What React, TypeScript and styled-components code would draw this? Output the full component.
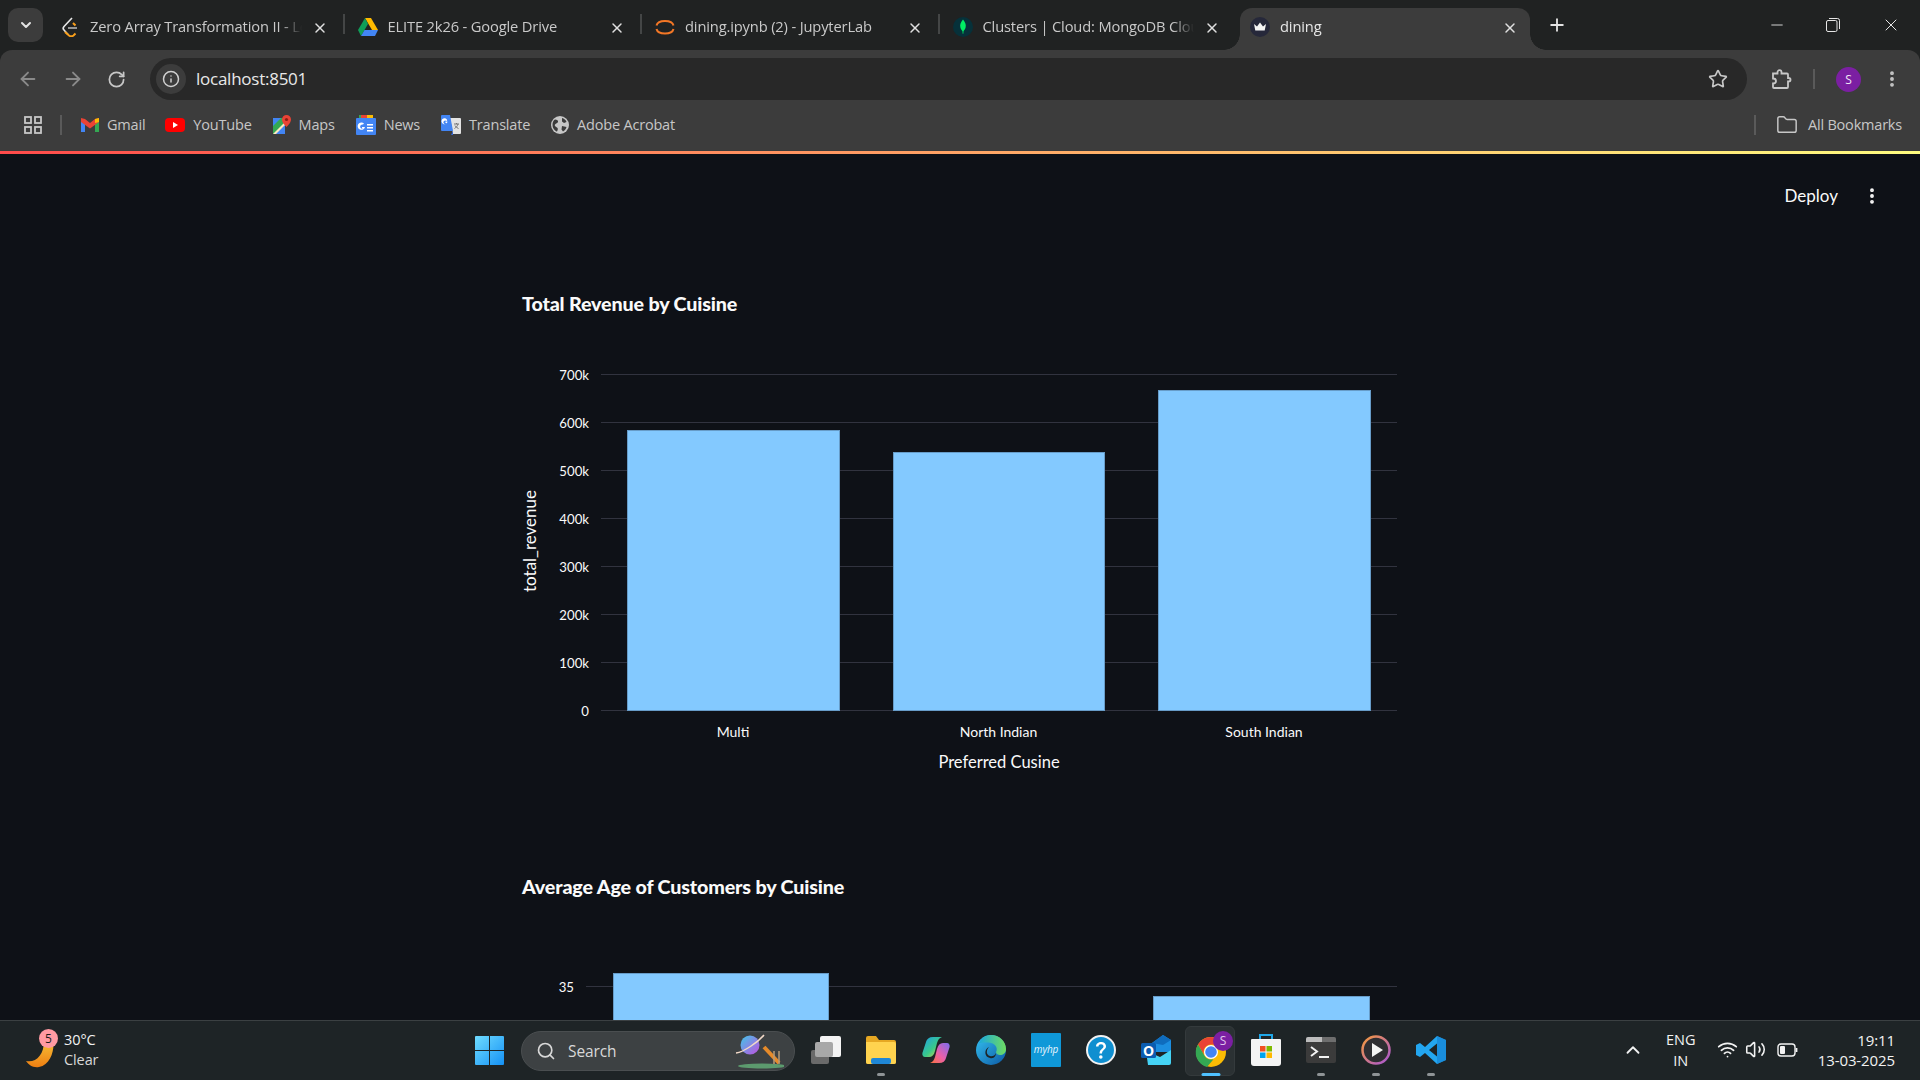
import React from "react";
import styled, { createGlobalStyle } from "styled-components";
import {
  ArrowLeft,
  ArrowRight,
  ChevronDown,
  ChevronUp,
  EllipsisVertical,
  Folder,
  Info,
  Minus,
  Plus,
  RotateCw,
  Search,
  Star,
  Volume2,
  Wifi,
  X,
} from "lucide-react";

const uiFont = `"Open Sans", "Noto Sans", sans-serif`;
const appFont = `"Lato", "Noto Sans", sans-serif`;

const GlobalStyle = createGlobalStyle`
  html, body, #root { margin: 0; padding: 0; height: 100%; }
  body { background: #0e1117; overflow: hidden; font-family: ${uiFont}; }
`;

const Shell = styled.div`
  width: 1920px;
  height: 1080px;
  display: flex;
  flex-direction: column;
  overflow: hidden;
  background: #202222;
`;

/* ---------- tab strip ---------- */

const TabStrip = styled.div`
  height: 50px;
  flex: none;
  display: flex;
  align-items: flex-end;
  padding-left: 8px;
  background: #202222;
`;

const TabSearch = styled.div`
  width: 35px;
  height: 34px;
  margin: 0 5px 8px 0;
  flex: none;
  display: flex;
  align-items: center;
  justify-content: center;
  border-radius: 10px;
  background: #3c3c3c;
  color: #e3e3e3;
`;

const TabCell = styled.div<{ $active?: boolean; $last?: boolean }>`
  position: relative;
  width: ${({ $active }) => ($active ? "290px" : "297.5px")};
  height: 42px;
  flex: none;
  margin-left: ${({ $active }) => ($active ? "2px" : "0")};
  padding: ${({ $active }) => ($active ? "0 12px 0 10px" : "0 18px 0 12px")};
  box-sizing: border-box;
  display: flex;
  align-items: center;
  gap: 10px;
  color: ${({ $active }) => ($active ? "#e6e6e6" : "#c9c9c9")};
  background: ${({ $active }) => ($active ? "#3c3c3c" : "transparent")};
  border-radius: 12px 12px 0 0;

  &::after {
    content: "";
    position: absolute;
    display: ${({ $active, $last }) => ($active || $last ? "none" : "block")};
    right: 1px;
    top: 6px;
    width: 2px;
    height: 20px;
    background: #444646;
  }

  &::before {
    content: "";
    position: absolute;
    display: ${({ $active }) => ($active ? "block" : "none")};
    left: -16px;
    right: -16px;
    bottom: 0;
    height: 16px;
    z-index: 0;
    background:
      radial-gradient(circle at 0 0, transparent 15.5px, #3c3c3c 16px) left bottom / 16px 16px no-repeat,
      radial-gradient(circle at 100% 0, transparent 15.5px, #3c3c3c 16px) right bottom / 16px 16px no-repeat;
  }
`;

const Favicon = styled.span`
  width: 20px;
  height: 20px;
  flex: none;
  position: relative;
  z-index: 1;
  margin-top: -4px;
  display: flex;
  align-items: center;
  justify-content: center;
`;

const TabTitle = styled.span`
  flex: 1;
  min-width: 0;
  position: relative;
  z-index: 1;
  overflow: hidden;
  white-space: nowrap;
  font-size: 14.700px;
  letter-spacing: -0.150px;
  line-height: 20px;
  margin-top: -7px;
  mask-image: linear-gradient(90deg, #000 90%, transparent 100%);
`;

const TabClose = styled.span`
  flex: none;
  position: relative;
  z-index: 1;
  display: flex;
  color: #e0e0e0;
  margin-top: -2px;
`;

const NewTab = styled.div`
  margin: 0 0 8px 17px;
  height: 34px;
  display: flex;
  align-items: center;
  color: #e3e3e3;
`;

const WindowControls = styled.div`
  margin-left: auto;
  height: 50px;
  display: flex;
  align-items: flex-start;
  color: #e6e6e6;
`;

const WindowButton = styled.div<{ $wide?: boolean }>`
  width: ${({ $wide }) => ($wide ? "59px" : "56px")};
  height: 50px;
  display: flex;
  align-items: center;
  justify-content: center;
`;

/* ---------- toolbar ---------- */

const Toolbar = styled.div`
  height: 50px;
  flex: none;
  display: flex;
  align-items: flex-start;
  padding-top: 8px;
  box-sizing: border-box;
  background: #3c3c3c;
  border-radius: 12px 12px 0 0;
`;

const NavButtons = styled.div`
  width: 150px;
  height: 42px;
  flex: none;
  display: flex;
  align-items: center;
  padding-left: 17px;
  box-sizing: border-box;
  gap: 23px;
`;

const NavIcon = styled.span<{ $dim?: boolean }>`
  display: flex;
  color: ${({ $dim }) => ($dim ? "#8a8a8a" : "#c7c7c7")};
`;

const Omnibox = styled.div`
  width: 1597px;
  height: 42px;
  flex: none;
  display: flex;
  align-items: center;
  padding: 0 19px 0 6px;
  box-sizing: border-box;
  border-radius: 21px;
  background: #282828;
  color: #e8e8e8;
  font-size: 17px;
  letter-spacing: -0.250px;
`;

const SiteInfo = styled.span`
  width: 30px;
  height: 30px;
  margin-right: 10px;
  border-radius: 50%;
  background: #3c3c3c;
  display: flex;
  align-items: center;
  justify-content: center;
  color: #d0d0d0;
`;

const Url = styled.span`
  flex: 1;
  margin-top: -2px;
`;

const ToolbarEnd = styled.div`
  flex: 1;
  height: 42px;
  display: flex;
  align-items: center;
  color: #c7c7c7;
  padding-left: 24px;
`;

const VerticalRule = styled.span<{ $ml?: number; $mr?: number }>`
  width: 2px;
  height: 20px;
  flex: none;
  margin-left: ${({ $ml }) => $ml ?? 0}px;
  margin-right: ${({ $mr }) => $mr ?? 0}px;
  background: #5a5a5a;
`;

const Avatar = styled.span`
  width: 25px;
  height: 25px;
  margin: 0 21px 0 21px;
  border-radius: 50%;
  flex: none;
  background: #7b1fa2;
  color: #f0e6f5;
  font-size: 12px;
  display: flex;
  align-items: center;
  justify-content: center;
`;

/* ---------- bookmarks ---------- */

const BookmarkBar = styled.div`
  height: 51px;
  flex: none;
  display: flex;
  align-items: center;
  padding: 0 18px 2px 24px;
  box-sizing: border-box;
  background: #3c3c3c;
  color: #c7c7c7;
  font-size: 14.500px;
  letter-spacing: -0.200px;
`;

const Bookmark = styled.span<{ $gap: number }>`
  display: flex;
  align-items: center;
  gap: 8px;
  margin-left: ${({ $gap }) => $gap}px;
  white-space: nowrap;
`;

const AllBookmarks = styled.span`
  margin-left: auto;
  display: flex;
  align-items: center;
  white-space: nowrap;
`;

const FolderSlot = styled.span`
  display: flex;
  margin: 0 10px 0 20px;
`;

const Decoration = styled.div`
  height: 3px;
  flex: none;
  background: linear-gradient(90deg, #ff4b4b, #fffd80);
`;

/* ---------- streamlit page ---------- */

const Page = styled.main`
  flex: 1;
  min-height: 0;
  overflow: hidden;
  background: #0e1117;
  color: #fafafa;
  font-family: ${appFont};
`;

const AppHeader = styled.div`
  height: 83px;
  display: flex;
  align-items: center;
  justify-content: flex-end;
  gap: 24px;
  padding-right: 38px;
  font-size: 17px;
`;

const Column = styled.div`
  width: 876px;
  margin: 0 auto;
`;

const SectionTitle = styled.h3<{ $top: number }>`
  margin: ${({ $top }) => $top}px 0 16px;
  height: 40px;
  line-height: 40px;
  font-size: 19.700px;
  font-weight: 900;
  letter-spacing: -0.150px;
  white-space: nowrap;
`;

const ChartSvg = styled.svg`
  display: block;
  overflow: visible;

  text {
    fill: #fafafa;
    font-family: ${appFont};
  }
`;

type BarDatum = { label: string; value: number; x: number; width: number };

type ChartProps = {
  height: number;
  zeroY: number;
  tickStep: number;
  tickPx: number;
  ticks: number[];
  gridStart: number;
  tickEnd: number;
  bars: BarDatum[];
  xTitle?: string;
  yTitle?: string;
};

const formatTick = (v: number) => (v >= 1000 ? `${v / 1000}k` : `${v}`);

const BarChart: React.FC<ChartProps> = ({
  height,
  zeroY,
  tickStep,
  tickPx,
  ticks,
  gridStart,
  tickEnd,
  bars,
  xTitle,
  yTitle,
}) => {
  const toY = (v: number) => zeroY - (v / tickStep) * tickPx;
  return (
    <ChartSvg width={876} height={height} viewBox={`0 0 876 ${height}`}>
      {ticks.map((t) => (
        <g key={t}>
          <line x1={gridStart} x2={875} y1={toY(t) + 0.5} y2={toY(t) + 0.5} stroke="#31333f" />
          <text x={tickEnd} y={toY(t) + 6} textAnchor="end" fontSize={13.2}>
            {formatTick(t)}
          </text>
        </g>
      ))}
      {bars.map((b) => (
        <g key={b.label}>
          <rect
            x={b.x + 0.5}
            y={Math.round(toY(b.value)) + 0.5}
            width={b.width}
            height={zeroY - Math.round(toY(b.value))}
            fill="#83c9ff"
            stroke="#679cc8"
          />
          {xTitle && (
            <text x={b.x + b.width / 2} y={zeroY + 27} textAnchor="middle" fontSize={14}>
              {b.label}
            </text>
          )}
        </g>
      ))}
      {xTitle && (
        <text x={477} y={zeroY + 58} textAnchor="middle" fontSize={16.5}>
          {xTitle}
        </text>
      )}
      {yTitle && (
        <text x={0} y={0} textAnchor="middle" fontSize={17} transform="translate(14 201) rotate(-90)">
          {yTitle}
        </text>
      )}
    </ChartSvg>
  );
};

/* ---------- taskbar ---------- */

const Taskbar = styled.footer`
  position: relative;
  height: 60px;
  flex: none;
  box-sizing: border-box;
  display: flex;
  align-items: center;
  background: #1e2426;
  border-top: 1px solid #3b4042;
  color: #f2f2f2;
  font-size: 14.500px;
  letter-spacing: -0.100px;
`;

const Weather = styled.div`
  width: 475px;
  height: 100%;
  flex: none;
  display: flex;
  align-items: center;
  gap: 3px;
  padding: 0 0 2px 26px;
  box-sizing: border-box;
`;

const WeatherArt = styled.span`
  position: relative;
  width: 35px;
  height: 38px;
  flex: none;
`;

const MoonSvg = styled.svg`
  position: absolute;
  left: 0;
  top: 8px;
`;

const Badge = styled.span`
  position: absolute;
  left: 13px;
  top: -2px;
  width: 19px;
  height: 19px;
  border-radius: 50%;
  background: #ff9aa2;
  color: #1b1b1b;
  font-size: 12px;
  line-height: 19px;
  text-align: center;
`;

const WeatherText = styled.span`
  display: flex;
  flex-direction: column;
  line-height: 20px;
`;

const MutedLine = styled.span`
  color: #d8d8d8;
`;

const StartButton = styled.span`
  width: 46px;
  flex: none;
  display: flex;
`;

const SearchPill = styled.div`
  width: 274px;
  height: 40px;
  flex: none;
  box-sizing: border-box;
  display: flex;
  align-items: center;
  padding: 0 10px 0 14px;
  gap: 12px;
  border-radius: 20px;
  border: 1px solid #4a4e50;
  background: #3d4143;
  color: #d8d8d8;
  font-size: 15.500px;
`;

const SearchLabel = styled.span`
  flex: 1;
`;

const AppRow = styled.div`
  margin-left: 3px;
  display: flex;
  align-items: center;
`;

const AppSlot = styled.span<{ $active?: boolean }>`
  position: relative;
  width: 55px;
  height: 50px;
  display: flex;
  align-items: center;
  justify-content: center;

  &::before {
    content: "";
    display: ${({ $active }) => ($active ? "block" : "none")};
    position: absolute;
    left: 2px;
    width: 50px;
    height: 50px;
    top: 0;
    border-radius: 6px;
    background: #2b3133;
    border: 1px solid #343a3c;
    box-sizing: border-box;
  }
`;

const SlotIcon = styled.span`
  position: relative;
  display: flex;
  margin-top: -2px;
`;

const RunDot = styled.span<{ $active?: boolean }>`
  position: absolute;
  bottom: 0;
  left: 50%;
  transform: translateX(-50%);
  height: 3px;
  width: ${({ $active }) => ($active ? "19px" : "8px")};
  border-radius: 2px;
  background: ${({ $active }) => ($active ? "#4fc1ff" : "#8f9496")};
`;

const Tray = styled.div`
  margin-left: auto;
  height: 100%;
  display: flex;
  align-items: center;
  padding: 0 25px 2px 0;
`;

const TrayChevron = styled.span`
  display: flex;
  margin-right: 15px;
`;

const Lang = styled.span`
  width: 44px;
  text-align: center;
  line-height: 21px;
  margin-right: 14px;
`;

const TrayIcons = styled.span`
  display: flex;
  align-items: center;
  gap: 7px;
  margin-right: 20px;
`;

const BatterySlot = styled.span`
  display: flex;
  margin-left: 4px;
`;

const Clock = styled.span`
  text-align: right;
  line-height: 20px;
  font-size: 15px;
`;

/* ---------- drawn logos ---------- */

const LeetCodeIcon = () => (
  <svg width="18" height="20" viewBox="0 0 18 20" fill="none">
    <path d="M11 1 3 9.500a2.500 2.500 0 0 0 0 3.500l4 4.500" stroke="#e8e8e8" strokeWidth="1.600" />
    <path d="M4 15l4 3.500c1.500 1 3 1 4.500 0l2-2M12 6l2.500 2.500" stroke="#f89f1b" strokeWidth="2" />
    <path d="M7 11h9" stroke="#b3b3b3" strokeWidth="1.600" />
  </svg>
);

const DriveIcon = () => (
  <svg width="20" height="18" viewBox="0 0 20 18">
    <path d="M7 0h6l7 12h-6z" fill="#ffba00" />
    <path d="M7 0 0 12l3 6 7-12z" fill="#0f9d58" />
    <path d="M6.500 12H20l-3 6H3z" fill="#4285f4" />
  </svg>
);

const JupyterIcon = () => (
  <svg width="20" height="20" viewBox="0 0 20 20" fill="none" stroke="#f37726" strokeWidth="2">
    <path d="M1.500 8.500C3 2.500 17 2.500 18.500 8.500" />
    <path d="M1.500 12C3 18 17 18 18.500 12" />
  </svg>
);

const MongoIcon = () => (
  <svg width="20" height="20" viewBox="0 0 20 20">
    <circle cx="10" cy="10" r="10" fill="#06313a" />
    <path d="M10 2.500c2.600 3 3.200 5.500 2.600 8-.4 1.700-1.600 3-2.100 3.800l-.2 2.400h-.6l-.2-2.400c-.5-.8-1.700-2.100-2.100-3.800-.6-2.500 0-5 2.600-8z" fill="#00ed64" />
  </svg>
);

const CrownIcon = () => (
  <svg width="20" height="20" viewBox="0 0 20 20">
    <circle cx="10" cy="10" r="10" fill="#26283a" />
    <path d="M4 7l3 2.500L10 5.500l3 4L16 7l-1.300 6.500H5.300z" fill="#f5f5f5" />
  </svg>
);

const AppsGrid = () => (
  <svg width="18" height="18" viewBox="0 0 18 18" fill="none" stroke="#c7c7c7" strokeWidth="1.800">
    <rect x="1" y="1" width="6" height="6" />
    <rect x="11" y="1" width="6" height="6" />
    <rect x="1" y="11" width="6" height="6" />
    <rect x="11" y="11" width="6" height="6" />
  </svg>
);

const GmailIcon = () => (
  <svg width="18" height="14" viewBox="0 0 18 14">
    <path d="M0 2v12h4V5z" fill="#4285f4" />
    <path d="M14 5v9h4V2z" fill="#34a853" />
    <path d="M14 1 9 5 4 1 0 0v4l9 6.500L18 4V0z" fill="#ea4335" />
    <path d="M14 1v4l4-1V0z" fill="#fbbc04" />
  </svg>
);

const YouTubeIcon = () => (
  <svg width="20" height="14" viewBox="0 0 20 14">
    <rect width="20" height="14" rx="4" fill="#ff0000" />
    <path d="M8 4l5 3-5 3z" fill="#fff" />
  </svg>
);

const MapsIcon = () => (
  <svg width="18" height="20" viewBox="0 0 18 20">
    <path d="M0 3h12v16H0z" fill="#34a853" />
    <path d="M0 3h8L0 11z" fill="#4285f4" />
    <path d="M0 19 12 7v12z" fill="#fbe9c0" />
    <path d="M3 19 12 10v9z" fill="#4285f4" />
    <path d="M13.500 0A4.500 4.500 0 0 0 9 4.500C9 8 13.500 12 13.500 12S18 8 18 4.500A4.500 4.500 0 0 0 13.500 0z" fill="#ea4335" />
    <circle cx="13.500" cy="4.500" r="1.600" fill="#8e1d14" />
  </svg>
);

const NewsIcon = () => (
  <svg width="20" height="20" viewBox="0 0 20 20">
    <path d="M3 0h14v5H3z" fill="#34a853" />
    <path d="M5 0h6v3H5z" fill="#ea4335" />
    <path d="M11 0h6v3h-6z" fill="#fbbc04" />
    <rect y="3" width="20" height="17" rx="1" fill="#4285f4" />
    <path d="M11 9h6v1.500h-6zM11 12h6v1.500h-6zM11 15h6v1.500h-6z" fill="#fff" />
    <path d="M9 12H6v1.500h1.500A2.200 2.200 0 1 1 7 9.500l1-1A3.700 3.700 0 1 0 9 12z" fill="#fff" />
  </svg>
);

const TranslateIcon = () => (
  <svg width="20" height="20" viewBox="0 0 20 20">
    <path d="M9 3h10a1 1 0 0 1 1 1v14a1 1 0 0 1-1 1H12z" fill="#e3e3e3" />
    <path d="M1 0h8l3 16H1a1 1 0 0 1-1-1V1a1 1 0 0 1 1-1z" fill="#4285f4" />
    <path d="M12 16l-2 4 2 0z" fill="#3367d6" />
    <path d="M6.500 6.500H4.500V8H6a1.800 1.800 0 1 1-.500-2l.8-.8A3 3 0 1 0 6.500 6.500z" fill="#fff" />
    <path d="M13 9h5M15.500 8v1M17 9c-.5 2-2 3.500-3.500 4.500M14 10.500c.7 1.300 2 2.500 3.500 3" stroke="#757575" strokeWidth="1" fill="none" />
  </svg>
);

const GlobeIcon = () => (
  <svg width="18" height="18" viewBox="0 0 18 18">
    <circle cx="9" cy="9" r="9" fill="#c7c7c7" />
    <path d="M4 3.500c2 0 3.500 1 3 2.500S5 7 4 8.500 5.500 11 6.500 12 6 16 5.500 15.500C3 14 1.500 12 1.500 9S2.500 4.500 4 3.500zM11 2c2 .5 4 2 4.500 4l-2.500 1-2-1.500zM11 10l4.500 1c-.5 2-2 3.500-3.500 4.500l-1.500-2z" fill="#3c3c3c" />
  </svg>
);

const RestoreIcon = () => (
  <svg width="14" height="14" viewBox="0 0 14 14" fill="none" stroke="#e6e6e6" strokeWidth="1">
    <rect x="0.500" y="2.500" width="10.500" height="11" rx="1.500" />
    <path d="M3 .5h8.500a2 2 0 0 1 2 2V11" />
  </svg>
);

const PuzzleIcon = () => (
  <svg width="21" height="21" viewBox="0 0 21 21" fill="none" stroke="#c7c7c7" strokeWidth="1.800">
    <path d="M2 4.500h4.500V3.200a2 2 0 0 1 4 0v1.300H16a1 1 0 0 1 1 1V9h.8a1.700 1.700 0 0 1 0 3.400H17V18a1 1 0 0 1-1 1H3a1 1 0 0 1-1-1v-3.500c2 0 3-1 3-2.500s-1-2.500-3-2.500z" />
  </svg>
);

const MoonIcon = () => (
  <MoonSvg width="28" height="30" viewBox="0 0 28 30">
    <defs>
      <linearGradient id="moon" x1="0" x2="0" y1="0" y2="1">
        <stop offset="0" stopColor="#f7c53a" />
        <stop offset="1" stopColor="#ee7f12" />
      </linearGradient>
    </defs>
    <path d="M27 0c2 10-2 26-14 28C7 29 3 26 0 22c10 2 18-6 18-20z" fill="url(#moon)" />
  </MoonSvg>
);

const WindowsLogo = () => (
  <svg width="29" height="29" viewBox="0 0 29 29">
    <defs>
      <linearGradient id="win" x1="0" x2="1" y1="0" y2="1">
        <stop offset="0" stopColor="#6fdcff" />
        <stop offset="1" stopColor="#1591f5" />
      </linearGradient>
    </defs>
    <path d="M0 1a1 1 0 0 1 1-1h13v14H0zM15 0h13a1 1 0 0 1 1 1v13H15zM0 15h14v14H1a1 1 0 0 1-1-1zM15 15h14v13a1 1 0 0 1-1 1H15z" fill="url(#win)" />
  </svg>
);

const SearchArt = () => (
  <svg width="54" height="36" viewBox="0 0 50 36">
    <defs>
      <linearGradient id="planet" x1="0" x2="1" y1="0" y2="1">
        <stop offset="0" stopColor="#3fc7e8" />
        <stop offset="1" stopColor="#c34fe0" />
      </linearGradient>
    </defs>
    <ellipse cx="30" cy="33" rx="24" ry="2.500" fill="#5c9a6e" />
    <circle cx="18" cy="12" r="9.500" fill="url(#planet)" />
    <path d="M4 20C12 19 26 9 32 2" stroke="#f2d9c8" strokeWidth="1.500" fill="none" />
    <path d="M32 14 47 30" stroke="#e58a2a" strokeWidth="4" />
    <path d="M42 18v13M47 18v13" stroke="#b79a78" strokeWidth="1.500" />
  </svg>
);

const TaskViewIcon = () => (
  <svg width="30" height="28" viewBox="0 0 30 28">
    <rect x="0" y="14" width="18" height="14" rx="2" fill="#6a6a6a" />
    <rect x="9" y="0" width="21" height="21" rx="2" fill="#f4f4f4" />
    <rect x="4" y="6" width="18" height="15" rx="2" fill="#a8a8a8" />
  </svg>
);

const ExplorerIcon = () => (
  <svg width="30" height="28" viewBox="0 0 30 28">
    <path d="M0 2a2 2 0 0 1 2-2h8l3 4h15a2 2 0 0 1 2 2v20a2 2 0 0 1-2 2H2a2 2 0 0 1-2-2z" fill="#e6a823" />
    <path d="M0 6h28a2 2 0 0 1 2 2v18a2 2 0 0 1-2 2H2a2 2 0 0 1-2-2z" fill="#ffd34f" />
    <rect x="5" y="22" width="20" height="6" rx="2" fill="#1f87d6" />
  </svg>
);

const CopilotIcon = () => (
  <svg width="30" height="28" viewBox="0 0 28 28">
    <defs>
      <linearGradient id="cpA" x1="0" x2="1" y1="0" y2="1">
        <stop offset="0" stopColor="#1f9fe8" />
        <stop offset="0.550" stopColor="#39c98a" />
        <stop offset="1" stopColor="#f7d73a" />
      </linearGradient>
      <linearGradient id="cpB" x1="1" x2="0" y1="0" y2="1">
        <stop offset="0" stopColor="#7a6cf0" />
        <stop offset="0.550" stopColor="#ec5fa8" />
        <stop offset="1" stopColor="#f9733d" />
      </linearGradient>
    </defs>
    <path d="M11 1h9c-3 1-4 3-5 6l-2 8c-1 4-3 6-6 6H3c-2 0-3-2-2.600-4L4 6c.7-3 3-5 7-5z" fill="url(#cpA)" />
    <path d="M17 27H8c3-1 4-3 5-6l2-8c1-4 3-6 6-6h4c2 0 3 2 2.600 4L24 22c-.7 3-3 5-7 5z" fill="url(#cpB)" />
  </svg>
);

const EdgeIcon = () => (
  <svg width="30" height="30" viewBox="0 0 30 30">
    <defs>
      <linearGradient id="edgeA" x1="0" x2="1" y1="0" y2="1">
        <stop offset="0" stopColor="#35c1f1" />
        <stop offset="1" stopColor="#0c59a4" />
      </linearGradient>
      <linearGradient id="edgeB" x1="0" x2="1" y1="0" y2="0">
        <stop offset="0" stopColor="#1ba8dc" />
        <stop offset="1" stopColor="#6fdc5f" />
      </linearGradient>
    </defs>
    <circle cx="15" cy="15" r="15" fill="url(#edgeA)" />
    <path d="M3 8C6 2 11 0 15 0c8 0 15 6 15 14 0 4-3 6-6 6-2 0-4-1-4-3 2-3 0-8-5-9C10 7 6 8 3 8z" fill="url(#edgeB)" />
    <path d="M13 12c-3 3-3 8 1 9 2 .6 5 0 6-3 0 3-2 6-6 5-6-1-6-9-1-11z" fill="#1e2426" />
  </svg>
);

const HpText = styled.text`
  fill: #eaf6fc;
  font-size: 10px;
  font-style: italic;
`;

const MyHpIcon = () => (
  <svg width="30" height="34" viewBox="0 0 30 34">
    <rect width="30" height="34" rx="1" fill="#0f98d8" />
    <HpText x="15" y="20" textAnchor="middle">myhp</HpText>
  </svg>
);

const HelpIcon = () => (
  <svg width="30" height="30" viewBox="0 0 30 30">
    <circle cx="15" cy="15" r="14" fill="#0f8fd0" stroke="#f2f2f2" strokeWidth="2" />
    <path d="M10 11.500C10 8.500 12.500 7 15 7s5 1.500 5 4.300c0 3.500-4 3.500-4 7.200h-2.500c0-4.500 4-4.500 4-7.200 0-1.300-1-2-2.500-2s-2.500.8-2.500 2.200z" fill="#fff" />
    <circle cx="14.800" cy="22" r="1.800" fill="#fff" />
  </svg>
);

const OutlookText = styled.text`
  fill: #fff;
  font-size: 14px;
  font-weight: 700;
`;

const OutlookIcon = () => (
  <svg width="30" height="30" viewBox="0 0 30 30">
    <path d="M11 8 22 0l8 5v12H11z" fill="#1c8ee0" />
    <path d="M22 0l8 5-8 5-11-2z" fill="#0f6cbd" />
    <path d="M5 16l14 6 11-7v13a2 2 0 0 1-2 2H7z" fill="#45d3f5" />
    <rect x="0" y="8" width="15" height="15" rx="1.500" fill="#0a5cb0" />
    <OutlookText x="7.500" y="20.500" textAnchor="middle">O</OutlookText>
  </svg>
);

const ChromeBadgeText = styled.text`
  fill: #e0c8ee;
  font-size: 12px;
`;

const ChromeIcon = () => (
  <svg width="48" height="40" viewBox="-8 0 48 40">
    <circle cx="16" cy="22" r="15" fill="#fbbc04" />
    <path d="M16 7a15 15 0 0 1 13 7.500H16a7.500 7.500 0 0 0-6.500 11.200L3 14.500A15 15 0 0 1 16 7z" fill="#ea4335" />
    <path d="M3 14.500l6.500 11.200a7.500 7.500 0 0 0 9 3.500L12 37A15 15 0 0 1 3 14.500z" fill="#34a853" />
    <circle cx="16" cy="22" r="7" fill="#fff" />
    <circle cx="16" cy="22" r="5.800" fill="#4285f4" />
    <circle cx="28" cy="11" r="10" fill="#7b1fa2" />
    <ChromeBadgeText x="28" y="15" textAnchor="middle">S</ChromeBadgeText>
  </svg>
);

const StoreIcon = () => (
  <svg width="30" height="32" viewBox="0 0 30 32">
    <path d="M9 5V1h12v4" fill="none" stroke="#1fa7e8" strokeWidth="2" />
    <path d="M1 5h28a1 1 0 0 1 1 1v23a3 3 0 0 1-3 3H3a3 3 0 0 1-3-3V6a1 1 0 0 1 1-1z" fill="#f4f4f4" />
    <rect x="9" y="12" width="5.500" height="5.500" fill="#f25022" />
    <rect x="15.500" y="12" width="5.500" height="5.500" fill="#7fba00" />
    <rect x="9" y="18.500" width="5.500" height="5.500" fill="#00a4ef" />
    <rect x="15.500" y="18.500" width="5.500" height="5.500" fill="#ffb900" />
  </svg>
);

const TerminalIcon = () => (
  <svg width="30" height="26" viewBox="0 0 30 26">
    <rect width="30" height="26" rx="2" fill="#3b3b3b" />
    <path d="M0 2a2 2 0 0 1 2-2h14v5H0z" fill="#bdbdbd" />
    <path d="M16 0h12a2 2 0 0 1 2 2v3H16z" fill="#6e6e6e" />
    <path d="M5 10l6 4.500L5 19" fill="none" stroke="#f2f2f2" strokeWidth="2" />
    <path d="M13 20h10" stroke="#f2f2f2" strokeWidth="2" />
  </svg>
);

const PlayerIcon = () => (
  <svg width="30" height="30" viewBox="0 0 30 30">
    <defs>
      <linearGradient id="ring" x1="0" x2="1" y1="0" y2="1">
        <stop offset="0" stopColor="#f59a3b" />
        <stop offset="1" stopColor="#a855d6" />
      </linearGradient>
    </defs>
    <circle cx="15" cy="15" r="13.500" fill="#2e2e32" stroke="url(#ring)" strokeWidth="2.500" />
    <path d="M11 8l11 7-11 7z" fill="#f4f4f4" />
  </svg>
);

const VsCodeIcon = () => (
  <svg width="30" height="30" viewBox="0 0 30 30">
    <path d="M21 1 30 5v20l-9 4-12-11-5 4-4-2V10l4-2 5 4zM21 8.500 13 15l8 6.500z" fill="#23a6f0" />
    <path d="M21 1 30 5v20l-9 4z M21 8.500V21.500" fill="#1584d4" opacity="0.700" />
  </svg>
);

const BatteryIcon = () => (
  <svg width="21" height="14" viewBox="0 0 21 14" fill="none">
    <rect x="1" y="1" width="17" height="12" rx="3" stroke="#f2f2f2" strokeWidth="1.400" />
    <rect x="3" y="3" width="5" height="8" rx="1" fill="#f2f2f2" />
    <path d="M19.500 5v4" stroke="#f2f2f2" strokeWidth="1.800" />
  </svg>
);

/* ---------- data ---------- */

const tabs = [
  { title: "Zero Array Transformation II - LeetCode", icon: <LeetCodeIcon /> },
  { title: "ELITE 2k26 - Google Drive", icon: <DriveIcon /> },
  { title: "dining.ipynb (2) - JupyterLab", icon: <JupyterIcon /> },
  { title: "Clusters | Cloud: MongoDB Cloud", icon: <MongoIcon />, last: true },
];

const bookmarks = [
  { label: "Gmail", icon: <GmailIcon />, gap: 19 },
  { label: "YouTube", icon: <YouTubeIcon />, gap: 20 },
  { label: "Maps", icon: <MapsIcon />, gap: 21 },
  { label: "News", icon: <NewsIcon />, gap: 21 },
  { label: "Translate", icon: <TranslateIcon />, gap: 21 },
  { label: "Adobe Acrobat", icon: <GlobeIcon />, gap: 21 },
];

const taskApps = [
  { key: "taskview", icon: <TaskViewIcon /> },
  { key: "explorer", icon: <ExplorerIcon />, running: true },
  { key: "copilot", icon: <CopilotIcon /> },
  { key: "edge", icon: <EdgeIcon /> },
  { key: "myhp", icon: <MyHpIcon /> },
  { key: "help", icon: <HelpIcon /> },
  { key: "outlook", icon: <OutlookIcon /> },
  { key: "chrome", icon: <ChromeIcon />, running: true, active: true },
  { key: "store", icon: <StoreIcon /> },
  { key: "terminal", icon: <TerminalIcon />, running: true },
  { key: "player", icon: <PlayerIcon />, running: true },
  { key: "vscode", icon: <VsCodeIcon />, running: true },
];

const revenueBars: BarDatum[] = [
  { label: "Multi", value: 583500, x: 105, width: 212 },
  { label: "North Indian", value: 537500, x: 371, width: 211 },
  { label: "South Indian", value: 667000, x: 636, width: 212 },
];

const ageBars: BarDatum[] = [
  { label: "Multi", value: 36.35, x: 91, width: 215 },
  { label: "South Indian", value: 34, x: 631, width: 216 },
];

const App: React.FC = () => {
  return (
    <Shell>
      <GlobalStyle />
      <TabStrip>
        <TabSearch>
          <ChevronDown size={16} strokeWidth={3} />
        </TabSearch>
        {tabs.map((t) => (
          <TabCell key={t.title} $last={t.last}>
            <Favicon>{t.icon}</Favicon>
            <TabTitle>{t.title}</TabTitle>
            <TabClose>
              <X size={16} strokeWidth={2.2} />
            </TabClose>
          </TabCell>
        ))}
        <TabCell $active>
          <Favicon>
            <CrownIcon />
          </Favicon>
          <TabTitle>dining</TabTitle>
          <TabClose>
            <X size={16} strokeWidth={2.2} />
          </TabClose>
        </TabCell>
        <NewTab>
          <Plus size={20} strokeWidth={2.2} />
        </NewTab>
        <WindowControls>
          <WindowButton>
            <Minus size={18} strokeWidth={1.2} />
          </WindowButton>
          <WindowButton>
            <RestoreIcon />
          </WindowButton>
          <WindowButton $wide>
            <X size={20} strokeWidth={1.2} />
          </WindowButton>
        </WindowControls>
      </TabStrip>

      <Toolbar>
        <NavButtons>
          <NavIcon $dim>
            <ArrowLeft size={22} strokeWidth={2} />
          </NavIcon>
          <NavIcon $dim>
            <ArrowRight size={22} strokeWidth={2} />
          </NavIcon>
          <NavIcon>
            <RotateCw size={19} strokeWidth={2.2} />
          </NavIcon>
        </NavButtons>
        <Omnibox>
          <SiteInfo>
            <Info size={18} strokeWidth={2} />
          </SiteInfo>
          <Url>localhost:8501</Url>
          <NavIcon>
            <Star size={20} strokeWidth={2} />
          </NavIcon>
        </Omnibox>
        <ToolbarEnd>
          <PuzzleIcon />
          <VerticalRule $ml={21} />
          <Avatar>S</Avatar>
          <EllipsisVertical size={20} strokeWidth={2.6} />
        </ToolbarEnd>
      </Toolbar>

      <BookmarkBar>
        <AppsGrid />
        <VerticalRule $ml={18} />
        {bookmarks.map((b) => (
          <Bookmark key={b.label} $gap={b.gap}>
            {b.icon}
            {b.label}
          </Bookmark>
        ))}
        <AllBookmarks>
          <VerticalRule />
          <FolderSlot>
            <Folder size={22} strokeWidth={1.6} />
          </FolderSlot>
          All Bookmarks
        </AllBookmarks>
      </BookmarkBar>
      <Decoration />

      <Page>
        <AppHeader>
          <span>Deploy</span>
          <EllipsisVertical size={20} strokeWidth={2.6} />
        </AppHeader>
        <Column>
          <SectionTitle $top={47}>Total Revenue by Cuisine</SectionTitle>
          <BarChart
            height={470}
            zeroY={370}
            tickStep={100000}
            tickPx={48}
            ticks={[0, 100000, 200000, 300000, 400000, 500000, 600000, 700000]}
            gridStart={79}
            tickEnd={67}
            bars={revenueBars}
            xTitle="Preferred Cusine"
            yTitle="total_revenue"
          />
          <SectionTitle $top={57}>Average Age of Customers by Cuisine</SectionTitle>
          <BarChart
            height={97}
            zeroY={399}
            tickStep={5}
            tickPx={48}
            ticks={[35]}
            gridStart={64}
            tickEnd={52}
            bars={ageBars}
          />
        </Column>
      </Page>

      <Taskbar>
        <Weather>
          <WeatherArt>
            <MoonIcon />
            <Badge>5</Badge>
          </WeatherArt>
          <WeatherText>
            <span>30°C</span>
            <MutedLine>Clear</MutedLine>
          </WeatherText>
        </Weather>
        <StartButton>
          <WindowsLogo />
        </StartButton>
        <SearchPill>
          <Search size={20} strokeWidth={2} />
          <SearchLabel>Search</SearchLabel>
          <SearchArt />
        </SearchPill>
        <AppRow>
          {taskApps.map((a) => (
            <AppSlot key={a.key} $active={a.active}>
              <SlotIcon>{a.icon}</SlotIcon>
              {a.running && <RunDot $active={a.active} />}
            </AppSlot>
          ))}
        </AppRow>
        <Tray>
          <TrayChevron>
            <ChevronUp size={22} strokeWidth={2} />
          </TrayChevron>
          <Lang>
            ENG
            <br />
            IN
          </Lang>
          <TrayIcons>
            <Wifi size={21} strokeWidth={2} />
            <Volume2 size={21} strokeWidth={1.8} />
            <BatterySlot>
              <BatteryIcon />
            </BatterySlot>
          </TrayIcons>
          <Clock>
            19:11
            <br />
            13-03-2025
          </Clock>
        </Tray>
      </Taskbar>
    </Shell>
  );
};

export default App;
